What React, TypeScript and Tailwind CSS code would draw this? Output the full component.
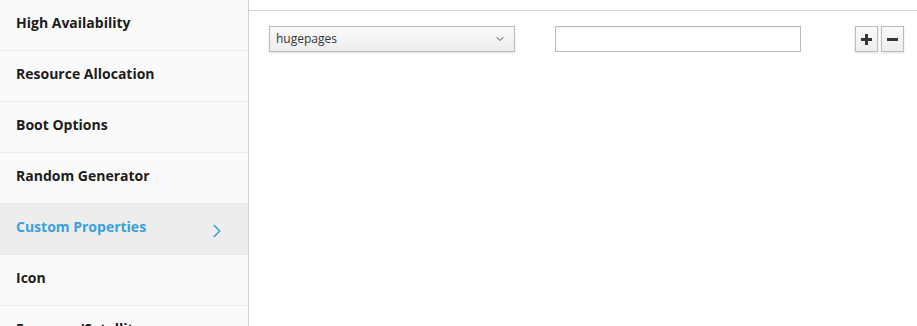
import { ChevronRight, ChevronDown } from 'lucide-react'

const items = [
  'High Availability',
  'Resource Allocation',
  'Boot Options',
  'Random Generator',
  'Custom Properties',
  'Icon',
  'Foreman/Satellite',
]

export default function App() {
  return (
    <div className="flex h-[326px] w-[917px] overflow-hidden bg-white font-['Open_Sans',sans-serif]">
      {/* Sidebar */}
      <div className="w-[249px] shrink-0 border-r border-[#d1d1d1] bg-[#fafafa]">
        {items.map((name) => {
          const active = name === 'Custom Properties'
          return (
            <div
              key={name}
              className={`flex h-[51px] items-center justify-between border-b border-[#ebebeb] pl-4 pr-[20px] text-[14px] font-bold ${
                active ? 'bg-[#ededed] text-[#39a0db]' : 'text-[#1c1c1c]'
              }`}
            >
              <span className="-mt-[6px]">{name}</span>
              {active && <ChevronRight size={22} strokeWidth={1.8} className="mt-[4px] text-[#39a0db]" />}
            </div>
          )
        })}
      </div>

      {/* Content */}
      <div className="flex-1 pt-[10px]">
        <div className="border-t border-[#d1d1d1] pl-5 pt-[15px]">
          <div className="flex items-center">
            <div className="flex h-[26px] w-[246px] items-center justify-between border border-[#bbbbbb] bg-gradient-to-b from-[#fafafa] to-[#ededed] pl-[6px] pr-[8px] text-[12px] text-[#363636] shadow-[0_1px_2px_rgba(0,0,0,0.12)]">
              <span>hugepages</span>
              <ChevronDown size={12} strokeWidth={2} className="text-[#4d5258]" />
            </div>
            <div className="ml-10 h-[26px] w-[246px] border border-[#bbbbbb] bg-white shadow-[inset_0_1px_1px_rgba(3,3,3,0.05)]" />
            <div className="ml-[54px] flex gap-[3px]">
              <button className="flex h-[26px] w-[23px] items-center justify-center border border-[#bbbbbb] bg-gradient-to-b from-[#fafafa] to-[#ededed] shadow-[0_1px_2px_rgba(0,0,0,0.12)]">
                <svg width="11" height="11" viewBox="0 0 11 11">
                  <rect x="4" y="0" width="3" height="11" fill="#363636" />
                  <rect x="0" y="4" width="11" height="3" fill="#363636" />
                </svg>
              </button>
              <button className="flex h-[26px] w-[23px] items-center justify-center border border-[#bbbbbb] bg-gradient-to-b from-[#fafafa] to-[#ededed] shadow-[0_1px_2px_rgba(0,0,0,0.12)]">
                <svg width="11" height="11" viewBox="0 0 11 11">
                  <rect x="0" y="4" width="11" height="3" fill="#363636" />
                </svg>
              </button>
            </div>
          </div>
        </div>
      </div>
    </div>
  )
}
